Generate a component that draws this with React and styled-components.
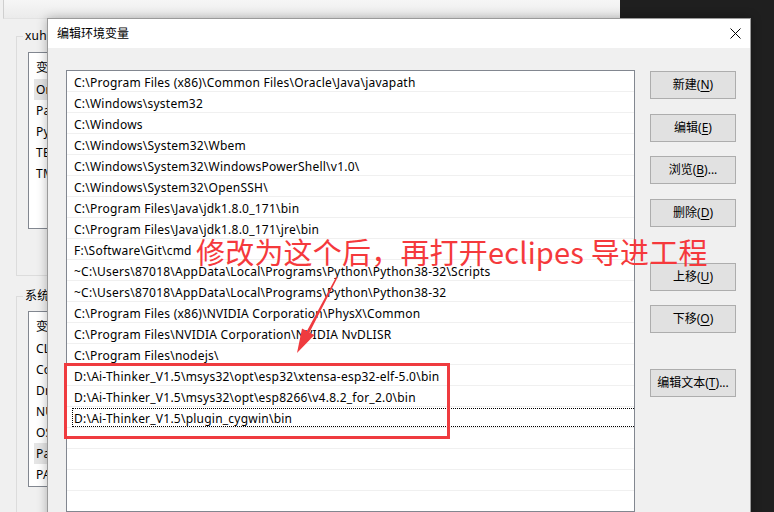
import React from "react";
import styled, { createGlobalStyle } from "styled-components";

const GlobalStyle = createGlobalStyle`
  html, body { margin: 0; padding: 0; overflow: hidden; background: #1f1f1f; }
  * { box-sizing: border-box; }
`;

const UI_FONT = `"Noto Sans", "Noto Sans CJK SC", sans-serif`;

const Desktop = styled.div`
  position: relative;
  width: 774px;
  height: 512px;
  overflow: hidden;
  background: #1f1f1f;
  font-family: ${UI_FONT};
  font-size: 12px;
  letter-spacing: 0.23px;
  color: #000;
`;

/* ---------- background window (only its left edge shows past the dialog) ---------- */
const BackWindow = styled.div`
  position: absolute;
  left: 0;
  top: 0;
  width: 620px;
  height: 540px;
  background: #f0f0f0;
  display: flex;
  flex-direction: column;
`;

const TopBand = styled.div`
  height: 20px;
  margin-left: 3px;
  border-left: 1px solid #cfcfcf;
  background: linear-gradient(#f6f6f6, #ebebeb);
  border-bottom: 1px solid #e2e2e2;
`;

const GroupBox = styled.div`
  position: relative;
  margin: ${(p) => p.$mt}px 0 0 16px;
  width: 40px;
  height: ${(p) => p.$h}px;
  border: 1px solid #dcdcdc;
  border-right: none;
  padding: ${(p) => p.$pt}px 0 0 11px;
`;

const GroupLabel = styled.span`
  position: absolute;
  top: -9px;
  left: 6px;
  width: 25px;
  overflow: hidden;
  padding: 0 0 0 2px;
  background: #f0f0f0;
  line-height: 16px;
  white-space: nowrap;
`;

const VarList = styled.div`
  width: 30px;
  height: ${(p) => p.$h}px;
  background: #fff;
  border: 1px solid #828790;
  border-right: none;
  overflow: hidden;
`;

const VarHeader = styled.div`
  height: 26px;
  padding: 4px 0 0 7px;
  line-height: 22px;
  white-space: nowrap;
`;

const VarRow = styled.div`
  height: 21px;
  line-height: 21px;
  margin-left: 5px;
  padding-left: 2px;
  background: ${(p) => (p.$selected ? "#e5e5e5" : "transparent")};
  white-space: nowrap;
`;

/* ---------- dialog ---------- */
const Dialog = styled.div`
  position: absolute;
  left: 47px;
  top: 18px;
  width: 704px;
  height: 540px;
  background: #f0f0f0;
  border: 1px solid #9a9a9a;
  box-shadow: 0 0 10px rgba(0, 0, 0, 0.28);
  display: flex;
  flex-direction: column;
`;

const TitleBar = styled.div`
  height: 29px;
  flex: none;
  background: #fff;
  display: flex;
  align-items: center;
  justify-content: space-between;
  padding: 0 9px 0 9px;
`;

const TitleText = styled.span`
  font-size: 12px;
  line-height: 16px;
  letter-spacing: 0;
`;

const CloseIcon = styled.svg`
  width: 11px;
  height: 11px;
  display: block;
`;

const DialogBody = styled.div`
  display: flex;
  gap: 15px;
  padding: 22px 13px 0 18px;
`;

const PathList = styled.div`
  width: 569px;
  height: 442px;
  flex: none;
  background: #fff;
  border: 1px solid #828790;
  overflow: hidden;
`;

const PathRow = styled.div`
  height: 21px;
  padding-top: 1px;
  border-bottom: 1px solid #f0f0f0;
`;

const PathText = styled.div`
  height: 19px;
  margin-left: 5px;
  padding: 1px 0 0 1px;
  border: 1px dotted ${(p) => (p.$focused ? "#000" : "transparent")};
  border-right: none;
  line-height: 18px;
  white-space: nowrap;
`;

const ButtonColumn = styled.div`
  width: 86px;
  flex: none;
  display: flex;
  flex-direction: column;
  padding-top: 1px;
`;

const Button = styled.div`
  height: 28px;
  margin-top: ${(p) => p.$mt || 0}px;
  background: #e1e1e1;
  border: 1px solid #adadad;
  display: flex;
  align-items: center;
  justify-content: center;
  font-size: 12px;
  line-height: 16px;
  letter-spacing: 0;
  white-space: nowrap;
  u { text-decoration: underline; text-underline-offset: 2px; }
`;

/* ---------- annotations ---------- */
const Note = styled.div`
  position: absolute;
  left: 196px;
  top: 237px;
  font-family: "Noto Sans CJK SC", sans-serif;
  font-size: 29px;
  line-height: 29px;
  letter-spacing: 0.2px;
  color: #f5393c;
  white-space: nowrap;
`;

const Arrow = styled.svg`
  position: absolute;
  left: 290px;
  top: 270px;
  width: 56px;
  height: 90px;
`;

const RedBox = styled.div`
  position: absolute;
  left: 64px;
  top: 363px;
  width: 386px;
  height: 76px;
  border: 3px solid #ef3b3f;
`;

const userVars = ["OneDrive", "Path", "PyCharm", "TEMP", "TMP"];
const sysVars = ["CLASSPATH", "ComSpec", "DriverData", "NUMBER_OF_PROCESSORS", "OS", "Path", "PATHEXT"];

const paths = [
  "C:\\Program Files (x86)\\Common Files\\Oracle\\Java\\javapath",
  "C:\\Windows\\system32",
  "C:\\Windows",
  "C:\\Windows\\System32\\Wbem",
  "C:\\Windows\\System32\\WindowsPowerShell\\v1.0\\",
  "C:\\Windows\\System32\\OpenSSH\\",
  "C:\\Program Files\\Java\\jdk1.8.0_171\\bin",
  "C:\\Program Files\\Java\\jdk1.8.0_171\\jre\\bin",
  "F:\\Software\\Git\\cmd",
  "~C:\\Users\\87018\\AppData\\Local\\Programs\\Python\\Python38-32\\Scripts",
  "~C:\\Users\\87018\\AppData\\Local\\Programs\\Python\\Python38-32",
  "C:\\Program Files (x86)\\NVIDIA Corporation\\PhysX\\Common",
  "C:\\Program Files\\NVIDIA Corporation\\NVIDIA NvDLISR",
  "C:\\Program Files\\nodejs\\",
  "D:\\Ai-Thinker_V1.5\\msys32\\opt\\esp32\\xtensa-esp32-elf-5.0\\bin",
  "D:\\Ai-Thinker_V1.5\\msys32\\opt\\esp8266\\v4.8.2_for_2.0\\bin",
  "D:\\Ai-Thinker_V1.5\\plugin_cygwin\\bin",
  "",
  "",
  "",
  "",
];

const buttons = [
  { label: "新建", key: "N", mt: 0 },
  { label: "编辑", key: "E", mt: 15 },
  { label: "浏览", key: "B", mt: 14, dots: true },
  { label: "删除", key: "D", mt: 15 },
  { label: "上移", key: "U", mt: 36 },
  { label: "下移", key: "O", mt: 14 },
  { label: "编辑文本", key: "T", mt: 36, dots: true },
];

export default function App() {
  return (
    <Desktop>
      <GlobalStyle />
      <BackWindow>
        <TopBand />
        <GroupBox $mt={17} $h={256} $pt={15}>
          <GroupLabel>xuhongxing 的用户变量(U)</GroupLabel>
          <VarList $h={177}>
            <VarHeader>变量</VarHeader>
            {userVars.map((v, i) => (
              <VarRow key={v} $selected={i === 0}>{v}</VarRow>
            ))}
          </VarList>
        </GroupBox>
        <GroupBox $mt={20} $h={260} $pt={14}>
          <GroupLabel>系统变量(S)</GroupLabel>
          <VarList $h={176}>
            <VarHeader>变量</VarHeader>
            {sysVars.map((v, i) => (
              <VarRow key={v + i} $selected={i === 5}>{v}</VarRow>
            ))}
          </VarList>
        </GroupBox>
      </BackWindow>

      <Dialog>
        <TitleBar>
          <TitleText>编辑环境变量</TitleText>
          <CloseIcon viewBox="0 0 11 11">
            <path d="M0.5 0.5 L10.5 10.5 M10.5 0.5 L0.5 10.5" stroke="#000" strokeWidth="1" fill="none" />
          </CloseIcon>
        </TitleBar>
        <DialogBody>
          <PathList>
            {paths.map((p, i) => (
              <PathRow key={i}>
                <PathText $focused={i === 16}>{p}</PathText>
              </PathRow>
            ))}
          </PathList>
          <ButtonColumn>
            {buttons.map((b) => (
              <Button key={b.key} $mt={b.mt}>
                {b.label}(<u>{b.key}</u>){b.dots ? "..." : ""}
              </Button>
            ))}
          </ButtonColumn>
        </DialogBody>
      </Dialog>

      <Note>修改为这个后，再打开eclipes 导进工程</Note>
      <Arrow viewBox="0 0 56 90">
        <polygon
          points="46.3,6.7 47.7,7.3 19.5,62.5 24.4,65.1 7,83 12,58.5 16.9,61.1"
          fill="#ef3b3f"
        />
      </Arrow>
      <RedBox />
    </Desktop>
  );
}
